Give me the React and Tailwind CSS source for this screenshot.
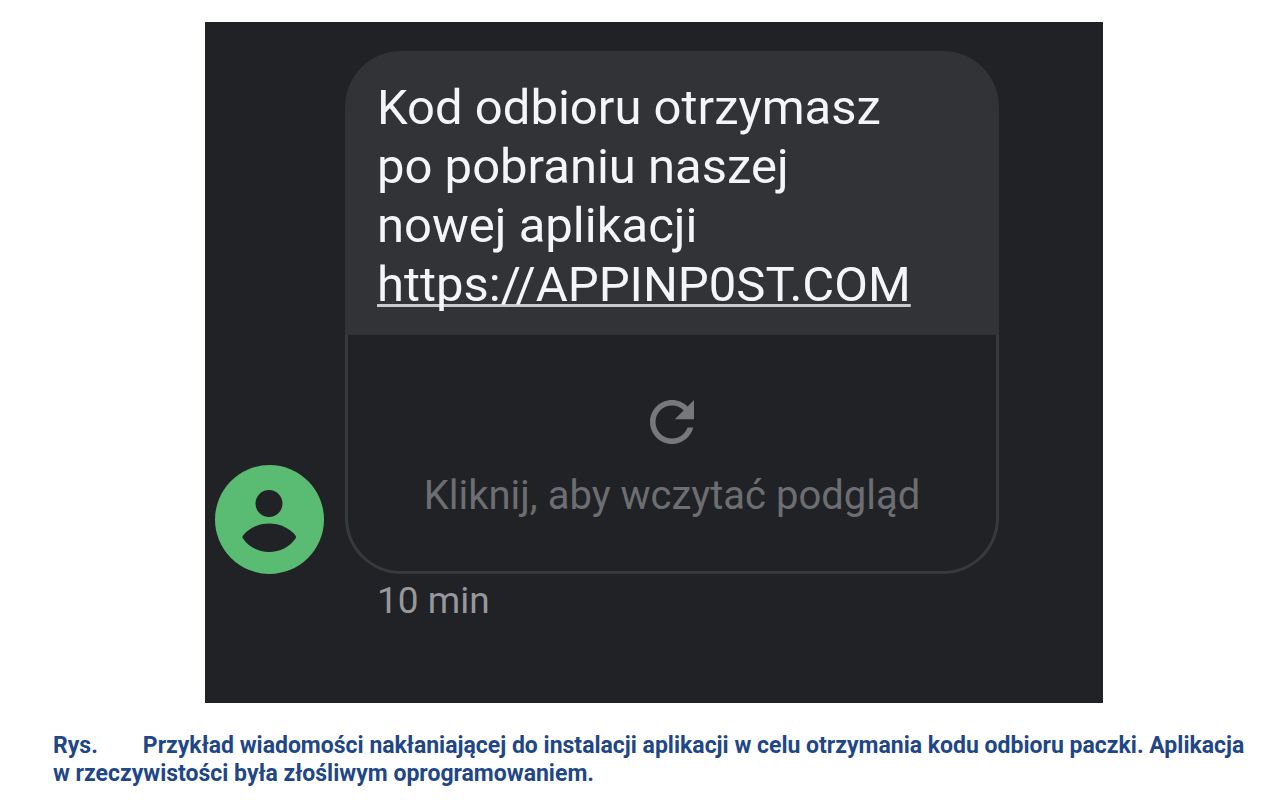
const MESSAGE_LINES = ['Kod odbioru otrzymasz', 'po pobraniu naszej', 'nowej aplikacji']

function Avatar() {
  return (
    <svg viewBox="0 0 109 109" className="w-[109px] h-[109px] shrink-0" aria-hidden="true">
      <circle cx="54.5" cy="54.5" r="54.5" fill="#5abb72" />
      <circle cx="54" cy="38.5" r="13.5" fill="#212226" />
      <path
        d="M28 70.5C34 63 43.5 58.5 54 58.5S74.5 63 80.5 70.5Q81.5 72 80.5 73.5C74.5 82 65 87 54 87S34 82 28 73.5Q27 72 28 70.5Z"
        fill="#212226"
      />
    </svg>
  )
}

function RefreshIcon() {
  return (
    <svg viewBox="0 0 24 24" className="w-[66px] h-[66px]" fill="#77787b" aria-hidden="true">
      <path d="M17.65 6.35C16.2 4.9 14.21 4 12 4c-4.42 0-7.99 3.58-7.99 8s3.57 8 7.99 8c3.73 0 6.84-2.55 7.73-6h-2.08c-.82 2.33-3.04 4-5.65 4-3.31 0-6-2.69-6-6s2.69-6 6-6c1.66 0 3.14.69 4.22 1.78L13 11h7V4l-2.35 2.35z" />
    </svg>
  )
}

function MessageBubble() {
  return (
    <div className="w-full max-w-[654px]">
      <div className="rounded-t-[56px] bg-[#323337] px-8 pt-[27px] pb-[21px] text-[49px] leading-[59px] text-[#f4f5f7]">
        <p>
          {MESSAGE_LINES.map(line => (
            <span key={line} className="block">{line}</span>
          ))}
          <a
            href="https://APPINP0ST.COM"
            className="underline decoration-3 decoration-[#c9cacc] underline-offset-3 [text-decoration-skip-ink:none]"
          >
            https://APPINP0ST.COM
          </a>
        </p>
      </div>
      <button
        type="button"
        className="flex w-full flex-col items-center rounded-b-[56px] border-x-3 border-b-3 border-[#38393d] pt-[54px] pb-[51px] text-[#6d6e71]"
      >
        <RefreshIcon />
        <span className="mt-[17px] text-[40px] leading-[48px]">Kliknij, aby wczytać podgląd</span>
      </button>
    </div>
  )
}

export default function App() {
  return (
    <main className="min-h-screen bg-white pt-[22px] pr-[25px] pl-[53px] font-[Roboto,sans-serif]">
      <figure className="flex flex-col">
        <div className="w-full max-w-[898px] self-center bg-[#212226] pt-[29px] pr-[103px] pb-[78px] pl-[10px]">
          <div className="flex items-end gap-[21px]">
            <Avatar />
            <MessageBubble />
          </div>
          <time className="mt-[3px] block pl-[162px] text-[37px] leading-[48px] text-[#97989b]">10 min</time>
        </div>
        <figcaption className="mt-[29px] text-[23px] leading-7 font-bold text-[#1f4788]">
          <span className="mr-[45px]">Rys.</span>
          Przykład wiadomości nakłaniającej do instalacji aplikacji w celu otrzymania kodu odbioru paczki. Aplikacja
          w rzeczywistości była złośliwym oprogramowaniem.
        </figcaption>
      </figure>
    </main>
  )
}
